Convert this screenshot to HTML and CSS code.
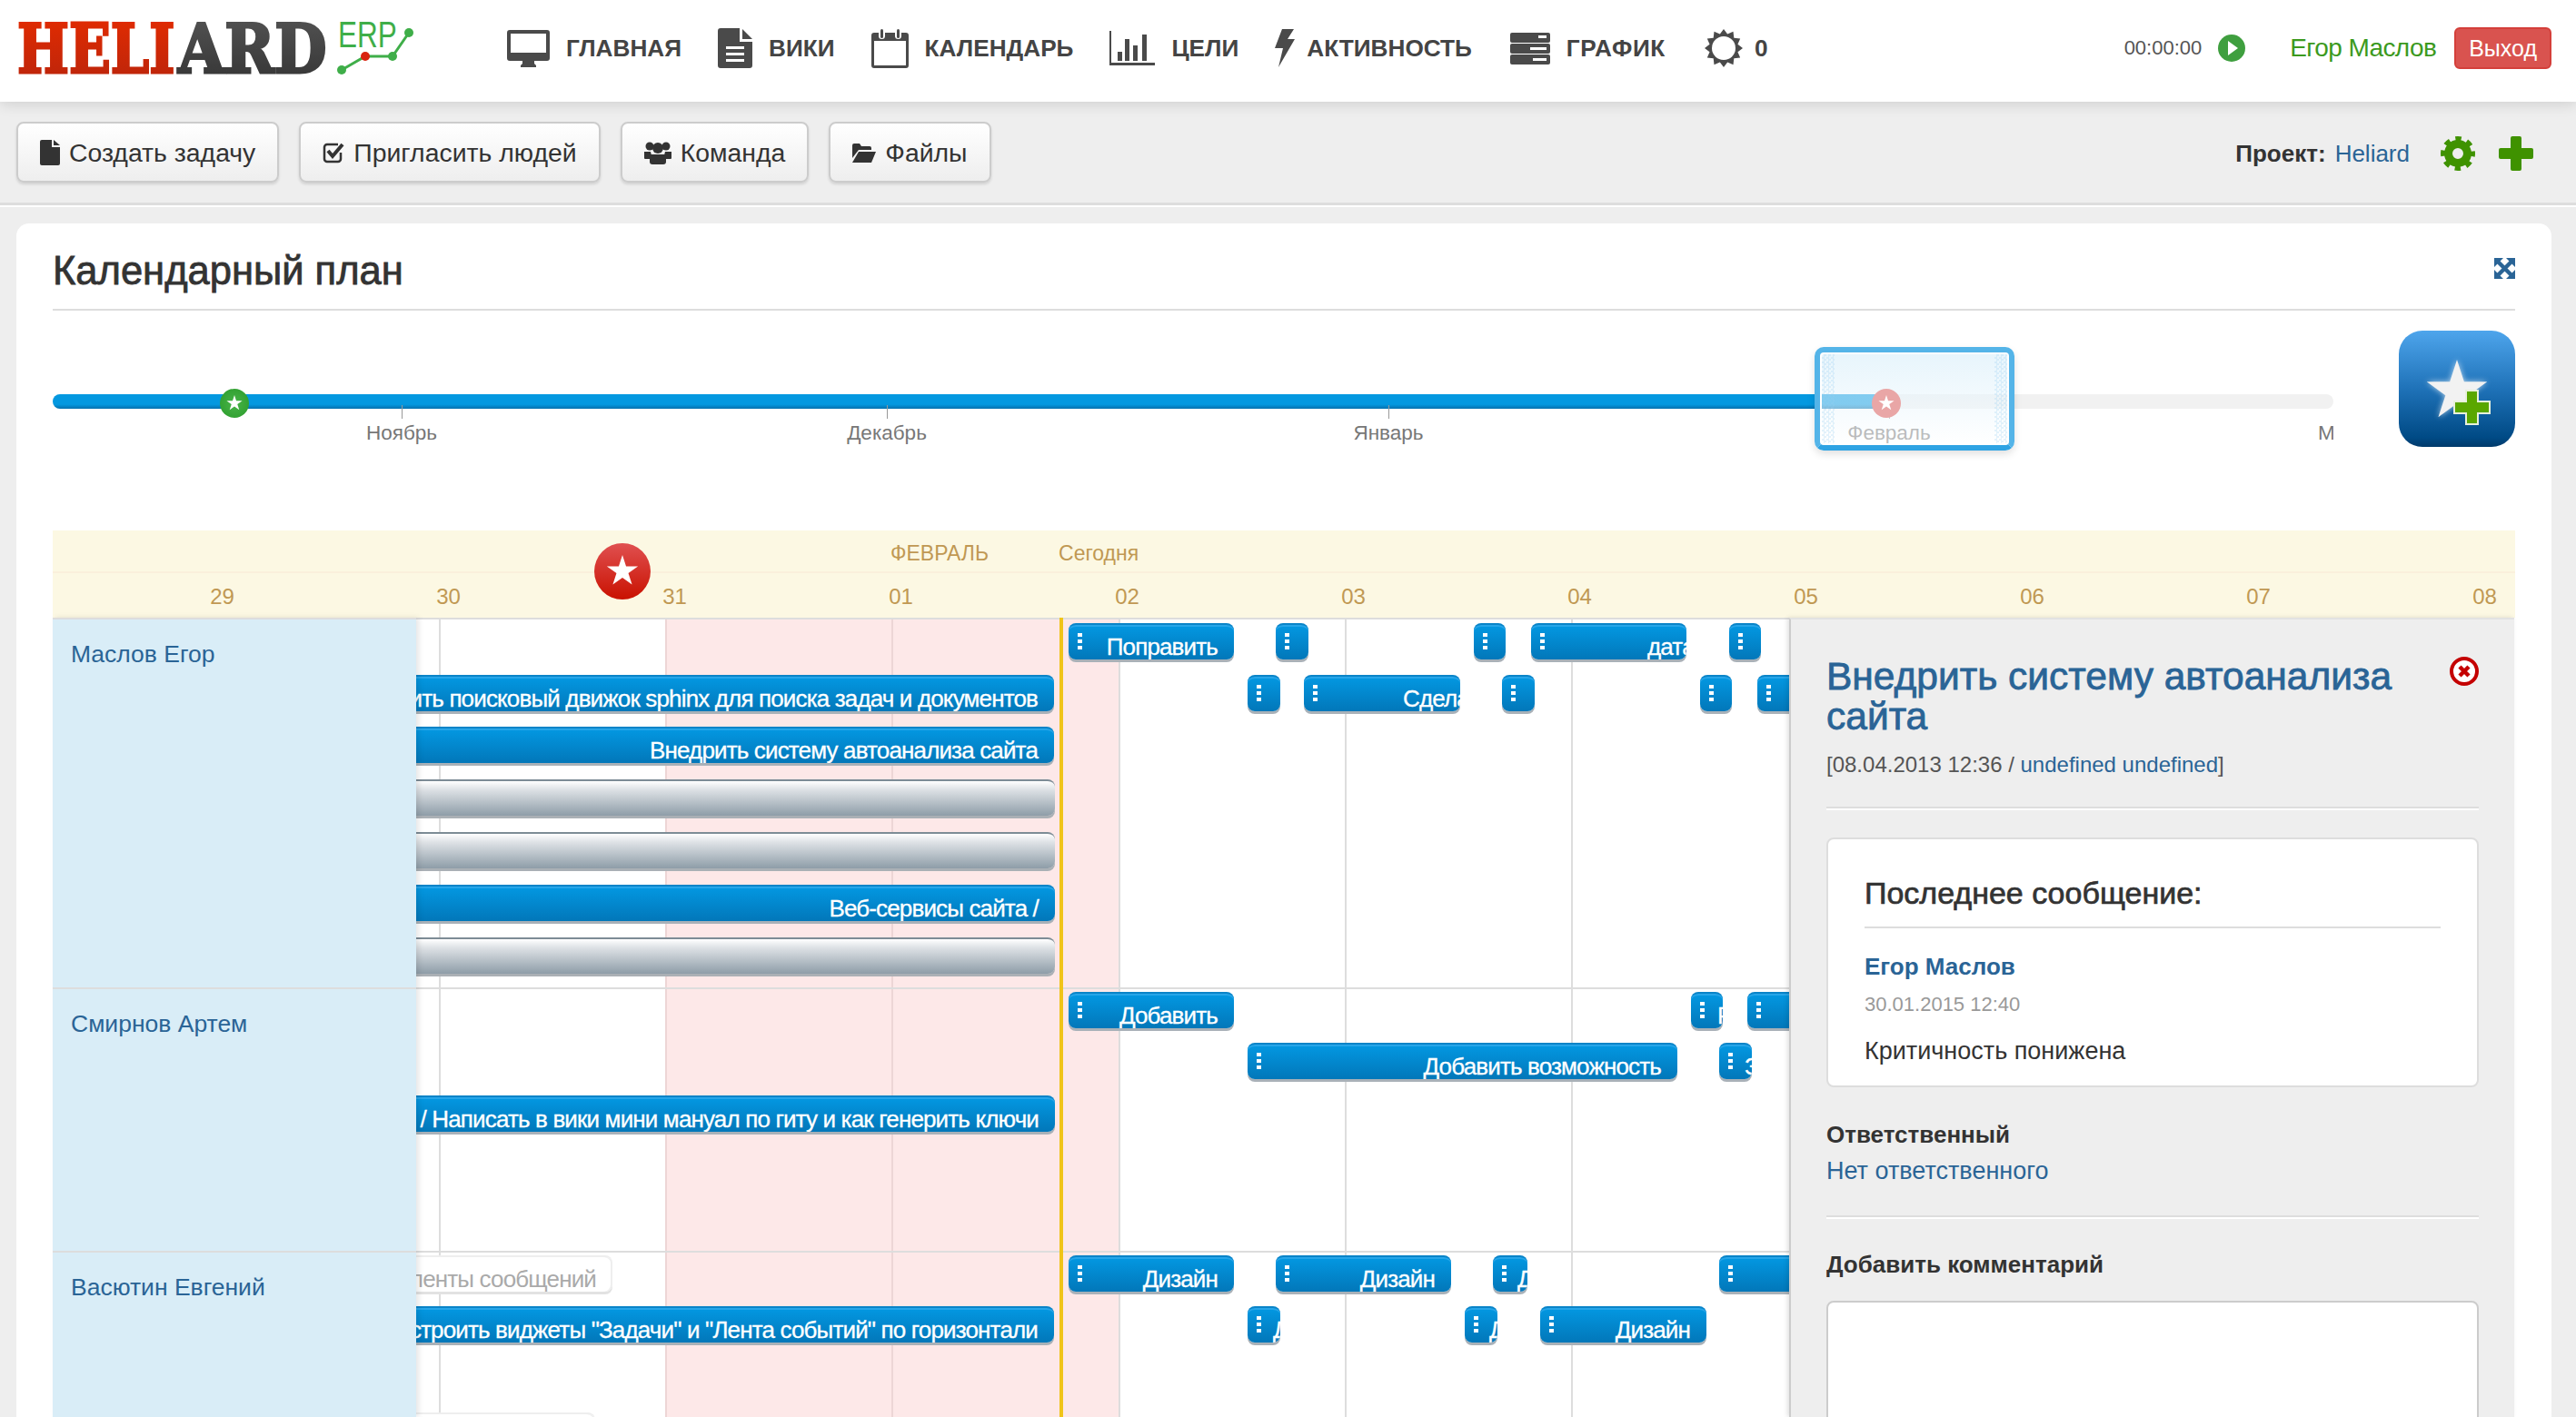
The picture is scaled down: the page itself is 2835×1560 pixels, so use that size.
FILE: index.html
```html
<!DOCTYPE html>
<html>
<head>
  <meta charset="utf-8">
  <title>Heliard ERP - Календарный план</title>
  <link rel="stylesheet" href="styles.css">
</head>
<body>

  <svg class="defs" width="0" height="0">
    <defs>
      <symbol id="star" viewBox="-10 -10 20 20">
        <polygon points="0,-10 2.25,-3.09 9.51,-3.09 3.63,1.18 5.88,8.09 0,3.82 -5.88,8.09 -3.63,1.18 -9.51,-3.09 -2.25,-3.09"/>
      </symbol>
      <linearGradient id="logoRed" x1="0" y1="0" x2="0" y2="1">
        <stop offset="0" stop-color="#e62c00"/>
        <stop offset="1" stop-color="#b8240c"/>
      </linearGradient>
      <linearGradient id="logoDark" x1="0" y1="0" x2="0" y2="1">
        <stop offset="0" stop-color="#555"/>
        <stop offset="1" stop-color="#333"/>
      </linearGradient>
    </defs>
  </svg>

  <div class="navbar">
    <svg class="logo" width="440" height="112" viewBox="0 0 440 112">
      <text class="logo-word" transform="translate(1 80) scale(.81 1)" textLength="214" lengthAdjust="spacingAndGlyphs" fill="url(#logoRed)" stroke="url(#logoRed)">HELI</text>
      <text class="logo-word" transform="translate(178 80) scale(.865 1)" textLength="189" lengthAdjust="spacingAndGlyphs" fill="url(#logoDark)" stroke="url(#logoDark)">ARD</text>
      <text class="logo-erp" transform="translate(354 52) scale(.79 1)" textLength="82" lengthAdjust="spacingAndGlyphs">ERP</text>
      <polyline points="358,77 384,62 414,62 432,36" fill="none" stroke="#3fae49" stroke-width="3"/>
      <circle cx="358" cy="77" r="5" fill="#3fae49"/>
      <circle cx="414" cy="62" r="5" fill="#3fae49"/>
      <circle cx="432" cy="36" r="5" fill="#3fae49"/>
      <circle cx="384" cy="62" r="5" fill="#d9230f"/>
    </svg>

    <ul class="menu">
      <li>
        <svg class="ico" width="47" height="41" viewBox="0 0 47 41"><path fill-rule="evenodd" d="M3 0h41a3 3 0 013 3v28a3 3 0 01-3 3H3a3 3 0 01-3-3V3a3 3 0 013-3zM4 4v21h39V4z"/><path d="M17 34h13v3l2 2v2H15v-2l2-2z"/></svg>
        ГЛАВНАЯ
      </li>
      <li>
        <svg class="ico" width="38" height="44" viewBox="0 0 38 44"><path d="M3 0h21v15h14v26a3 3 0 01-3 3H3a3 3 0 01-3-3V3a3 3 0 013-3z"/><path d="M27 1l11 11H27z"/><path fill="#fff" d="M9 20h20v3H9zM9 27h20v3H9zM9 34h20v3H9z"/></svg>
        ВИКИ
      </li>
      <li>
        <svg class="ico" width="41" height="44" viewBox="0 0 41 44"><path fill-rule="evenodd" d="M3 5h35a3 3 0 013 3v33a3 3 0 01-3 3H3a3 3 0 01-3-3V8a3 3 0 013-3zM3 14v27h35V14z"/><rect x="8" y="0" width="7" height="12" rx="3.5" fill="#fff"/><rect x="26" y="0" width="7" height="12" rx="3.5" fill="#fff"/><rect x="10" y="1" width="3" height="10" rx="1.5"/><rect x="28" y="1" width="3" height="10" rx="1.5"/></svg>
        КАЛЕНДАРЬ
      </li>
      <li>
        <svg class="ico" width="50" height="38" viewBox="0 0 50 38"><path d="M0 0h2v35h48v3H0z"/><path d="M9 23h5v10H9zM17 9h5v24h-5zM26 16h5v17h-5zM36 4h5v29h-5z"/></svg>
        ЦЕЛИ
      </li>
      <li class="tight">
        <svg class="ico" width="22" height="42" viewBox="0 0 22 42"><polygon points="8,0 21,0 14,11 22,11 4,42 9,21 0,21"/></svg>
        АКТИВНОСТЬ
      </li>
      <li class="wide">
        <svg class="ico" width="44" height="35" viewBox="0 0 44 35"><path fill-rule="evenodd" d="M2 0h40a2 2 0 012 2v7a2 2 0 01-2 2H2a2 2 0 01-2-2V2a2 2 0 012-2zM31 3v3h9V3zM2 12h40a2 2 0 012 2v7a2 2 0 01-2 2H2a2 2 0 01-2-2v-7a2 2 0 012-2zM22 16v3h18v-3zM2 24h40a2 2 0 012 2v7a2 2 0 01-2 2H2a2 2 0 01-2-2v-7a2 2 0 012-2zM25 28v3h15v-3z"/></svg>
        ГРАФИК
      </li>
      <li class="tight">
        <svg class="ico" width="42" height="42" viewBox="0 0 42 42"><polygon points="42,21 36.45,25.14 39.19,31.5 32.31,32.31 31.5,39.19 25.14,36.45 21,42 16.86,36.45 10.5,39.19 9.69,32.31 2.81,31.5 5.55,25.14 0,21 5.55,16.86 2.81,10.5 9.69,9.69 10.5,2.81 16.86,5.55 21,0 25.14,5.55 31.5,2.81 32.31,9.69 39.19,10.5 36.45,16.86"/><circle cx="21" cy="21" r="13" fill="#fff"/></svg>
        0
      </li>
    </ul>

    <div class="user-box">
      <span class="timer">00:00:00</span>
      <svg class="play" width="30" height="30" viewBox="0 0 30 30"><circle cx="15" cy="15" r="15" fill="#3f9f3f"/><polygon points="11,7 22,15 11,23" fill="#fff"/></svg>
      <a class="user-name">Егор Маслов</a>
      <button class="logout">Выход</button>
    </div>
  </div>

  <div class="toolbar">
    <button class="btn">
      <svg width="22" height="28" viewBox="0 0 22 28"><path d="M2 0h11v8h9v18a2 2 0 01-2 2H2a2 2 0 01-2-2V2a2 2 0 012-2z"/><path d="M15 0l7 6h-7z"/></svg>
      <span>Создать задачу</span>
    </button>
    <button class="btn">
      <svg width="24" height="26" viewBox="0 0 24 26"><path d="M17 4H5a3 3 0 00-3 3v13a3 3 0 003 3h12a3 3 0 003-3v-7" fill="none" stroke="#333" stroke-width="2.5"/><path d="M6 11l5 6 11-13" fill="none" stroke="#333" stroke-width="4"/></svg>
      <span>Пригласить людей</span>
    </button>
    <button class="btn">
      <svg width="30" height="26" viewBox="0 0 30 26"><circle cx="6" cy="6" r="4.5"/><circle cx="24" cy="6" r="4.5"/><circle cx="15" cy="8" r="6"/><path d="M0 12h7l2 8H1a1 1 0 01-1-1zM30 12h-7l-2 8h8a1 1 0 001-1z"/><path d="M8 15h14a2 2 0 012 2v6a3 3 0 01-3 3H9a3 3 0 01-3-3v-6a2 2 0 012-2z"/></svg>
      <span>Команда</span>
    </button>
    <button class="btn">
      <svg width="26" height="22" viewBox="0 0 26 22"><path d="M0 3a2 2 0 012-2h6l2 3h9a2 2 0 012 2v2H7L0 17z"/><path d="M7 10h19l-5 12H0z"/></svg>
      <span>Файлы</span>
    </button>

    <div class="project">
      <b>Проект:</b>
      <a>Heliard</a>
      <svg class="gear" width="38" height="38" viewBox="0 0 38 38"><circle cx="19" cy="19" r="16" fill="none" stroke="#3f9200" stroke-width="6" stroke-dasharray="6.3 6.27" stroke-dashoffset="3.15"/><circle cx="19" cy="19" r="10.5" fill="none" stroke="#3f9200" stroke-width="9"/></svg>
      <svg class="plus" width="38" height="38" viewBox="0 0 38 38"><path d="M15 0h8a2 2 0 012 2v11h11a2 2 0 012 2v8a2 2 0 01-2 2H25v11a2 2 0 01-2 2h-8a2 2 0 01-2-2V25H2a2 2 0 01-2-2v-8a2 2 0 012-2h11V2a2 2 0 012-2z" fill="#3f9200"/></svg>
    </div>
  </div>

  <div class="card">
    <div class="card-title">
      <h2>Календарный план</h2>
      <svg width="23" height="23" viewBox="0 0 23 23"><path d="M0 0h10L0 10zM23 0v10L13 0zM0 23V13l10 10zM23 23H13l10-10z" fill="#2a6496"/><path d="M3 3l17 17M20 3L3 20" stroke="#2a6496" stroke-width="4.5"/></svg>
    </div>

    <div class="timeline">
      <div class="track">
        <div class="track-done" style="width: 2018px"></div>
      </div>

      <div class="scale">
        <span class="tick" style="left: 384px"></span><span class="month" style="left: 384px">Ноябрь</span>
        <span class="tick" style="left: 918px"></span><span class="month" style="left: 918px">Декабрь</span>
        <span class="tick" style="left: 1470px"></span><span class="month" style="left: 1470px">Январь</span>
        <span class="tick" style="left: 2021px"></span><span class="month" style="left: 2021px">Февраль</span>
        <span class="month" style="left: 2520px">Март</span>
      </div>

      <div class="pin pin-green" style="left: 184px"><svg><use href="#star"/></svg></div>

      <div class="window"></div>
      <div class="pin pin-red" style="left: 2002px"><svg><use href="#star"/></svg></div>

      <div class="add-goal">
        <svg width="128" height="128" viewBox="0 0 128 128">
          <use class="goal-star" href="#star" x="29" y="32" width="70" height="70"/>
          <path d="M74 66h13v12h13v13H87v12H74V91H61V78h13z" fill="#5aa700" stroke="#e8f0dc" stroke-width="2"/>
        </svg>
      </div>
    </div>

    <div class="gantt">
      <div class="gantt-head">
        <div class="head-months">
          <span>ФЕВРАЛЬ</span>
          <span>Сегодня</span>
        </div>
        <div class="head-days">
          <span>29</span><span>30</span><span>31</span><span>01</span><span>02</span><span>03</span><span>04</span><span>05</span><span>06</span><span>07</span><span>08</span>
        </div>
        <div class="now-pin"><svg><use href="#star"/></svg></div>
      </div>

      <div class="gantt-body">
        <div class="people">
          <div class="person person-1"><a>Маслов Егор</a></div>
          <div class="person person-2"><a>Смирнов Артем</a></div>
          <div class="person"><a>Васютин Евгений</a></div>
        </div>

        <div class="chart">
          <div class="holiday" style="left: 274px; width: 499px"></div>
          <i class="vline" style="left: 25px"></i>
          <i class="vline vline-pink" style="left: 274px"></i>
          <i class="vline vline-pink" style="left: 523px"></i>
          <i class="vline" style="left: 773px"></i>
          <i class="vline" style="left: 1022px"></i>
          <i class="vline" style="left: 1271px"></i>
          <i class="hline" style="top: 0"></i>
          <i class="hline" style="top: 407px"></i>
          <i class="hline" style="top: 697px"></i>
          <i class="today" style="left: 708px"></i>

          <div class="bar" style="left: 718px; top: 6px; width: 182px">Поправить<i class="dots"></i></div>
          <div class="bar" style="left: 946px; top: 6px; width: 36px"><i class="dots"></i></div>
          <div class="bar" style="left: 1164px; top: 6px; width: 35px"><i class="dots"></i></div>
          <div class="bar bar-cut" style="left: 1227px; top: 6px; width: 171px; padding-left: 128px">дата<i class="dots"></i></div>
          <div class="bar" style="left: 1445px; top: 6px; width: 35px"><i class="dots"></i></div>

          <div class="bar" style="left: -20px; top: 63px; width: 722px">Настроить поисковый движок sphinx для поиска задач и документов</div>
          <div class="bar" style="left: 915px; top: 63px; width: 36px"><i class="dots"></i></div>
          <div class="bar bar-cut" style="left: 977px; top: 63px; width: 172px; padding-left: 109px">Сделать<i class="dots"></i></div>
          <div class="bar" style="left: 1195px; top: 63px; width: 36px"><i class="dots"></i></div>
          <div class="bar" style="left: 1413px; top: 63px; width: 35px"><i class="dots"></i></div>
          <div class="bar" style="left: 1476px; top: 63px; width: 60px"><i class="dots"></i></div>

          <div class="bar" style="left: -20px; top: 120px; width: 722px">Внедрить систему автоанализа сайта</div>
          <div class="bar bar-grey" style="left: -20px; top: 178px; width: 723px"></div>
          <div class="bar bar-grey" style="left: -20px; top: 236px; width: 723px"></div>
          <div class="bar" style="left: -20px; top: 294px; width: 723px">Веб-сервисы сайта /</div>
          <div class="bar bar-grey" style="left: -20px; top: 352px; width: 723px"></div>

          <div class="bar" style="left: 718px; top: 412px; width: 182px">Добавить<i class="dots"></i></div>
          <div class="bar bar-cut" style="left: 1403px; top: 412px; width: 35px; padding-left: 29px">Р<i class="dots"></i></div>
          <div class="bar" style="left: 1465px; top: 412px; width: 60px"><i class="dots"></i></div>
          <div class="bar" style="left: 915px; top: 468px; width: 473px">Добавить возможность<i class="dots"></i></div>
          <div class="bar bar-cut" style="left: 1434px; top: 468px; width: 36px; padding-left: 28px">З<i class="dots"></i></div>
          <div class="bar" style="left: -20px; top: 526px; width: 723px">Создать / Написать в вики мини мануал по гиту и как генерить ключи</div>

          <div class="bar bar-faded" style="left: -20px; top: 702px; width: 236px">из ленты сообщений</div>
          <div class="bar" style="left: 718px; top: 702px; width: 182px">Дизайн<i class="dots"></i></div>
          <div class="bar" style="left: 946px; top: 702px; width: 193px">Дизайн<i class="dots"></i></div>
          <div class="bar bar-cut" style="left: 1185px; top: 702px; width: 38px; padding-left: 27px">Дизайн<i class="dots"></i></div>
          <div class="bar" style="left: 1434px; top: 702px; width: 100px"><i class="dots"></i></div>

          <div class="bar" style="left: -20px; top: 758px; width: 722px">Перестроить виджеты "Задачи" и "Лента событий" по горизонтали</div>
          <div class="bar bar-cut" style="left: 915px; top: 758px; width: 36px; padding-left: 28px">Дизайн<i class="dots"></i></div>
          <div class="bar bar-cut" style="left: 1154px; top: 758px; width: 36px; padding-left: 27px">Дизайн<i class="dots"></i></div>
          <div class="bar" style="left: 1237px; top: 758px; width: 183px">Дизайн<i class="dots"></i></div>

          <div class="bar bar-faded" style="left: -20px; top: 875px; width: 217px"></div>
        </div>

        <div class="details">
          <div class="details-head">
            <h3>Внедрить систему автоанализа сайта</h3>
            <svg width="32" height="32" viewBox="0 0 32 32"><circle cx="16" cy="16" r="14" fill="#fff" stroke="#c40000" stroke-width="4"/><path d="M11 11l10 10M21 11L11 21" stroke="#c40000" stroke-width="4.5"/></svg>
          </div>
          <p class="meta">[08.04.2013 12:36 / <a>undefined undefined</a>]</p>
          <hr>
          <div class="message">
            <h4>Последнее сообщение:</h4>
            <a class="msg-author">Егор Маслов</a>
            <div class="msg-date">30.01.2015 12:40</div>
            <div class="msg-text">Критичность понижена</div>
          </div>
          <div class="field-label field-first">Ответственный</div>
          <a class="field-link">Нет ответственного</a>
          <hr class="hr-second">
          <div class="field-label field-comment">Добавить комментарий</div>
          <textarea class="comment"></textarea>
        </div>
      </div>
    </div>
  </div>

</body>
</html>
```

FILE: styles.css
```css
html,
body {
  margin: 0;
  height: 1560px;
  overflow: hidden;
}

body {
  font-family: "Liberation Sans", Arial, sans-serif;
  font-size: 28px;
  color: #333;
  background-color: #eee;
}

a {
  color: #2a6496;
}

.defs {
  position: absolute;
}

/* Шапка */
.navbar {
  position: relative;
  z-index: 2;
  display: flex;
  align-items: center;
  height: 112px;
  padding: 0 27px 0 18px;
  background-color: #fff;
  box-shadow: 0 3px 14px rgba(0, 0, 0, 0.13);
}

.logo {
  flex: none;
  margin-right: 100px;
}

.logo-word {
  font-family: "DejaVu Serif", serif;
  font-size: 75px;
  font-weight: bold;
  stroke-width: 3px;
}

.logo-erp {
  font-size: 40px;
  fill: #3fae49;
}

.menu {
  display: flex;
  gap: 40px;
  margin: 0 0 6px;
  padding: 0;
  list-style-type: none;
}

.menu li {
  display: flex;
  align-items: center;
  gap: 18px;
  font-size: 26.2px;
  font-weight: bold;
  color: #444;
}

.menu li.tight {
  gap: 13px;
}

.menu li.wide {
  margin-left: 2px;
  letter-spacing: 0.6px;
}

.menu li.wide + li {
  margin-left: 3px;
}

.ico {
  fill: #4a4a4a;
}

.user-box {
  display: flex;
  align-items: center;
  margin: 0 0 6px auto;
}

.timer {
  font-size: 22px;
  color: #555;
}

.play {
  margin: 0 49px 0 18px;
}

.user-name {
  letter-spacing: -0.6px;
  color: #3c9a1e;
}

.logout {
  height: 46px;
  margin-left: 20px;
  padding: 0 14px;
  font-family: inherit;
  font-size: 25px;
  color: #fff;
  background-color: #d9534f;
  border: 2px solid #d43f3a;
  border-radius: 6px;
}

/* Панель кнопок */
.toolbar {
  display: flex;
  align-items: center;
  gap: 22px;
  box-sizing: border-box;
  height: 114px;
  padding: 0 27px 0 18px;
  border-bottom: 3px solid #ddd;
  box-shadow: 0 2px 0 #fff;
}

.btn {
  display: flex;
  align-items: center;
  gap: 10px;
  height: 67px;
  padding: 0 24px;
  font-family: inherit;
  font-size: 28.4px;
  color: #333;
  background: linear-gradient(#fff, #eee);
  border: 2px solid #ccc;
  border-radius: 8px;
  box-shadow: 0 2px 3px rgba(0, 0, 0, 0.12);
}

.btn span {
  padding-top: 2px;
}

.btn svg {
  fill: #333;
}

.project {
  display: flex;
  align-items: center;
  margin: 3px 0 0 auto;
  gap: 10px;
  font-size: 26px;
}

.project b {
  color: #333;
}

.gear {
  margin-left: 24px;
}

.plus {
  margin: 0 20px 0 16px;
}

/* Карточка */
.card {
  box-sizing: border-box;
  height: 1400px;
  margin: 20px 27px 0 18px;
  padding: 0 40px;
  background-color: #fff;
  border-radius: 14px;
}

.card-title {
  display: flex;
  align-items: center;
  justify-content: space-between;
  box-sizing: border-box;
  height: 96px;
  padding: 10px 0 0;
  border-bottom: 2px solid #ddd;
}

.card-title svg {
  margin-bottom: 6px;
}

.card-title h2 {
  margin: 0;
  font-size: 43.5px;
  font-weight: normal;
  -webkit-text-stroke: 0.8px #333;
}

/* Шкала времени */
.timeline {
  position: relative;
  height: 242px;
}

.track {
  position: absolute;
  top: 92px;
  left: 0;
  width: 2510px;
  height: 16px;
  background-color: #f1f1f1;
  border-radius: 8px;
}

.track-done {
  height: 16px;
  background: linear-gradient(#0398e0 70%, #0270ae);
  border-radius: 8px 0 0 8px;
}

.scale {
  position: absolute;
  top: 100px;
  left: 0;
  width: 2510px;
  height: 60px;
  overflow: hidden;
}

.tick {
  position: absolute;
  top: 4px;
  width: 1px;
  height: 15px;
  background-color: #999;
}

.month {
  position: absolute;
  top: 22px;
  font-size: 22.5px;
  color: #777;
  transform: translateX(-50%);
}

.pin {
  position: absolute;
  top: 86px;
  width: 32px;
  height: 32px;
  border-radius: 50%;
}

.pin svg {
  display: block;
  width: 18px;
  height: 18px;
  margin: 7px;
  fill: #fff;
}

.pin-green {
  background: radial-gradient(#48b448, #2a9a2a);
}

.pin-red {
  background: #e9a6a6;
}

.window {
  position: absolute;
  top: 40px;
  left: 1939px;
  box-sizing: border-box;
  width: 220px;
  height: 114px;
  background: linear-gradient(rgba(215, 238, 250, 0.6), rgba(255, 255, 255, 0.5));
  border: 6px solid #54b4e8;
  border-bottom-color: #2ea3e3;
  border-radius: 10px;
  box-shadow: inset 0 0 0 2px #fff, 0 4px 8px rgba(0, 0, 0, 0.12);
}

.window::before,
.window::after {
  content: "";
  position: absolute;
  top: 2px;
  bottom: 2px;
  width: 14px;
  background: conic-gradient(rgba(150, 205, 240, 0.25) 25%, transparent 0 50%, rgba(150, 205, 240, 0.25) 0 75%, transparent 0) 0 0 / 5px 5px;
}

.window::before {
  left: 2px;
}

.window::after {
  right: 2px;
}

.add-goal {
  position: absolute;
  top: 22px;
  right: 0;
  width: 128px;
  height: 128px;
  background: linear-gradient(#4ea5ec, #1f72b8 50%, #004a85 92%, #003a6b);
  border-radius: 26px;
}

.goal-star {
  fill: #f2f2f2;
  filter: drop-shadow(0 0 3px rgba(255, 255, 255, 0.7));
}

/* Диаграмма */
.gantt-head {
  position: relative;
  height: 96px;
  background-color: #fcf8e3;
  font-size: 24px;
  color: #c09853;
}

.head-months {
  display: flex;
  gap: 77px;
  box-sizing: border-box;
  height: 47px;
  padding: 12px 0 0 922px;
  font-size: 23px;
  border-bottom: 2px solid #faf0dc;
}

.head-days {
  display: flex;
  box-sizing: border-box;
  height: 48px;
  padding: 12px 0 0 62px;
  overflow: hidden;
}

.head-days span {
  flex: none;
  width: 249px;
  text-align: center;
}

.now-pin {
  position: absolute;
  top: 14px;
  left: 596px;
  width: 62px;
  height: 62px;
  background: linear-gradient(#e05050, #c91100);
  border-radius: 50%;
}

.now-pin svg {
  display: block;
  width: 36px;
  height: 36px;
  margin: 13px;
  fill: #fff;
}

.gantt-body {
  display: flex;
  height: 880px;
}

.people {
  position: relative;
  z-index: 1;
  flex: none;
  width: 400px;
  background-color: #d9edf7;
  box-shadow: 3px 0 6px rgba(0, 0, 0, 0.1);
}

.person {
  box-sizing: border-box;
  padding: 23px 20px 0;
  font-size: 26.5px;
  border-top: 2px solid #ddd;
}

.person a {
  color: #2a6496;
}

.person-1 {
  height: 407px;
}

.person-2 {
  height: 290px;
}

.chart {
  position: relative;
  flex: none;
  width: 1511px;
  overflow: hidden;
}

.holiday {
  position: absolute;
  top: 0;
  bottom: 0;
  background-color: #fde8e8;
}

.vline {
  position: absolute;
  top: 0;
  bottom: 0;
  width: 2px;
  background-color: #ddd;
}

.vline-pink {
  background-color: #edd6d6;
}

.hline {
  position: absolute;
  left: 0;
  right: 0;
  height: 2px;
  background-color: #ddd;
}

.today {
  position: absolute;
  top: 0;
  bottom: 0;
  width: 4px;
  background-color: #f0c419;
}

.bar {
  position: absolute;
  display: flex;
  justify-content: flex-end;
  box-sizing: border-box;
  height: 40px;
  padding: 6px 18px 0 0;
  overflow: hidden;
  font-size: 26px;
  line-height: 36px;
  letter-spacing: -0.85px;
  color: #fff;
  white-space: nowrap;
  background: linear-gradient(#0398e2, #0277b9);
  border-top: 2px solid #0a84c8;
  border-radius: 8px;
  box-shadow: inset 0 2px 0 #27a5e8, 0 3px 0 #a9b1b8;
  -webkit-text-stroke: 0.3px #fff;
}

.bar-cut {
  justify-content: flex-start;
  padding-right: 0;
}

.bar-grey {
  background: linear-gradient(#fff, #dde1e5 25%, #8e9da8);
  border-top-color: #7d8c96;
  box-shadow: 0 3px 0 #aab0b5;
}

.bar-faded {
  color: #aaa;
  background: #fff;
  border-top-color: #eee;
  box-shadow: 0 3px 0 #e2e2e2, inset -2px 0 0 #eee;
  -webkit-text-stroke: 0;
}

.dots {
  position: absolute;
  top: 9px;
  left: 10px;
  width: 5px;
  height: 18px;
  background: repeating-linear-gradient(#fff 0 4px, transparent 4px 7px);
}

/* Детали задачи */
.details {
  position: relative;
  z-index: 1;
  flex: none;
  box-sizing: border-box;
  width: 798px;
  padding: 41px 39px 0;
  background-color: #eee;
  border-top: 2px solid #e2e2e2;
  border-left: 2px solid #ccc;
  box-shadow: -2px 0 5px rgba(0, 0, 0, 0.12);
}

.details-head {
  display: flex;
  justify-content: space-between;
  align-items: flex-start;
}

.details-head h3 {
  width: 640px;
  margin: 0;
  font-size: 42.5px;
  font-weight: normal;
  line-height: 44px;
  color: #2a6496;
  -webkit-text-stroke: 0.8px #2a6496;
}

.details-head svg {
  flex: none;
}

.meta {
  margin: 13px 0 0;
  font-size: 24px;
  line-height: 36px;
  color: #555;
}

.details hr {
  height: 2px;
  margin: 28px 0 0;
  background-color: #ddd;
  border: 0;
  box-shadow: 0 2px 0 #fff;
}

.message {
  box-sizing: border-box;
  height: 275px;
  margin-top: 32px;
  padding: 39px 40px 0;
  background-color: #fff;
  border: 2px solid #ddd;
  border-radius: 8px;
}

.message h4 {
  height: 57px;
  margin: 0 0 24px;
  font-size: 34px;
  font-weight: normal;
  line-height: 40px;
  border-bottom: 2px solid #ddd;
  -webkit-text-stroke: 0.7px #333;
}

.msg-author {
  font-size: 26px;
  font-weight: bold;
  line-height: 36px;
}

.msg-date {
  margin-top: 9px;
  font-size: 22px;
  line-height: 30px;
  color: #999;
}

.msg-text {
  margin-top: 18px;
  font-size: 27px;
  line-height: 36px;
}

.field-label {
  font-size: 26px;
  font-weight: bold;
  line-height: 36px;
}

.field-first {
  margin-top: 34px;
}

.field-link {
  display: block;
  margin-top: 4px;
  font-size: 27px;
  line-height: 36px;
}

.details hr.hr-second {
  margin-top: 31px;
}

.field-comment {
  margin-top: 34px;
}

.comment {
  display: block;
  box-sizing: border-box;
  width: 100%;
  height: 300px;
  margin-top: 22px;
  background-color: #fff;
  border: 2px solid #ccc;
  border-radius: 8px;
  resize: none;
}
```
